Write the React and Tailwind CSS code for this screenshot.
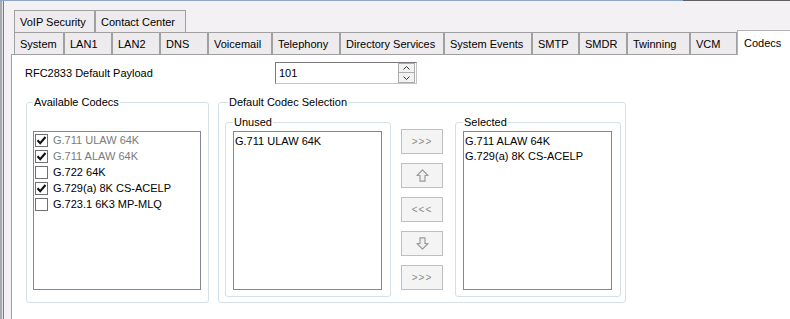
import React from "react";

function Tab({ className, children }) {
  return (
    <div
      className={
        "h-[22px] border border-b-0 border-[#a0a0a0] bg-[#eeebee] pl-[5px] pt-[1px] flex items-center whitespace-nowrap overflow-hidden " +
        className
      }
    >
      {children}
    </div>
  );
}

function Check({ checked }) {
  return (
    <div className="w-[13px] h-[13px] border border-[#707070] bg-white flex items-center justify-center shrink-0">
      {checked && (
        <svg width="11" height="11" viewBox="0 0 11 11">
          <path d="M1.5 5.2 L4.2 8.2 L9.5 2" fill="none" stroke="#111" strokeWidth="2.1" />
        </svg>
      )}
    </div>
  );
}

function CodecRow({ checked, disabled, label }) {
  return (
    <div className="h-[16px] flex items-center gap-[5px] pl-[1px]">
      <Check checked={checked} />
      <span className={disabled ? "text-[#7a7a7a]" : "text-black"}>{label}</span>
    </div>
  );
}

function Btn({ children }) {
  return (
    <div className="w-[42px] h-[25px] border border-[#bfbfbf] bg-[#f4f4f4] flex items-center justify-center text-[#8a8a8a] text-[10px] tracking-[1px]">
      {children}
    </div>
  );
}

function UpArrow() {
  return (
    <svg width="13" height="13" viewBox="0 0 13 13">
      <path d="M6.5 0.8 L12 6.5 L9 6.5 L9 12.2 L4 12.2 L4 6.5 L1 6.5 Z" fill="#f0f0f0" stroke="#9a9a9a" strokeWidth="1.2" strokeLinejoin="round" />
    </svg>
  );
}

function DownArrow() {
  return (
    <svg width="13" height="13" viewBox="0 0 13 13">
      <path d="M6.5 12.2 L12 6.5 L9 6.5 L9 0.8 L4 0.8 L4 6.5 L1 6.5 Z" fill="#f0f0f0" stroke="#9a9a9a" strokeWidth="1.2" strokeLinejoin="round" />
    </svg>
  );
}

function ListBox({ children }) {
  return (
    <div className="w-[149px] h-[159px] border border-[#828790] bg-white pl-[1px] pt-[1px]">
      {children}
    </div>
  );
}

export default function App() {
  return (
    <div className="w-[790px] h-[319px] overflow-hidden bg-[#f4f1f4] flex flex-col font-['Liberation_Sans',Arial,sans-serif] text-[11px] leading-[13px] text-black">
      {/* top line */}
      <div className="h-px flex shrink-0">
        <div className="w-[683px] bg-[#8ca6c8]" />
        <div className="flex-1 bg-[#606060]" />
      </div>
      <div className="flex-1 flex min-h-0">
        <div className="w-[2px] bg-[#a8aab2]" />
        <div className="w-px bg-[#e2e2e6]" />
        <div className="w-px bg-[#7d7d7d]" />
        <div className="w-[7px]" />
        <div className="flex-1 flex flex-col pt-[9px] min-w-0">
          {/* tab row 1 */}
          <div className="flex pl-[3px]">
            <Tab className="w-[81px]">VoIP Security</Tab>
            <Tab className="w-[91px]">Contact Center</Tab>
          </div>
          {/* tab row 2 */}
          <div className="flex pl-[3px] h-[22px] items-start">
            <Tab className="w-[50px]">System</Tab>
            <Tab className="w-[48px]">LAN1</Tab>
            <Tab className="w-[48px]">LAN2</Tab>
            <Tab className="w-[48px]">DNS</Tab>
            <Tab className="w-[64px]">Voicemail</Tab>
            <Tab className="w-[68px]">Telephony</Tab>
            <Tab className="w-[104px]">Directory Services</Tab>
            <Tab className="w-[88px]">System Events</Tab>
            <Tab className="w-[47px]">SMTP</Tab>
            <Tab className="w-[48px]">SMDR</Tab>
            <Tab className="w-[63px]">Twinning</Tab>
            <Tab className="w-[47px]">VCM</Tab>
            <div className="relative z-10 flex-1 h-[25px] -mt-[2px] border-l border-t border-[#b4b4b4] bg-white pl-[6px] flex items-center whitespace-nowrap">
              Codecs
            </div>
          </div>
          {/* panel */}
          <div className="flex-1 bg-white border-l border-t border-[#a0a0a0] pl-[13px] pt-[7px]">
            <div className="flex items-center h-[22px]">
              <div className="w-[250px]">RFC2833 Default Payload</div>
              <div className="w-[142px] h-[22px] border border-t-[#7a7a7a] border-l-[#7a7a7a] border-r-[#c4c4c4] border-b-[#c4c4c4] flex items-center">
                <span className="pl-[3px]">101</span>
                <div className="ml-auto mr-px flex flex-col">
                  <div className="w-[17px] h-[10px] border border-[#acacac] bg-[#f2f2f2] flex items-center justify-center">
                    <svg width="7" height="4" viewBox="0 0 7 4">
                      <path d="M0.5 3.5 L3.5 0.5 L6.5 3.5" fill="none" stroke="#333" strokeWidth="1" />
                    </svg>
                  </div>
                  <div className="w-[17px] h-[10px] border border-t-0 border-[#acacac] bg-[#f2f2f2] flex items-center justify-center">
                    <svg width="7" height="4" viewBox="0 0 7 4">
                      <path d="M0.5 0.5 L3.5 3.5 L6.5 0.5" fill="none" stroke="#333" strokeWidth="1" />
                    </svg>
                  </div>
                </div>
              </div>
            </div>

            <div className="flex mt-[12px] ml-px gap-[9px] items-start">
              {/* Available Codecs */}
              <fieldset className="w-[183px] border border-[#d5dfe5] rounded-[3px] pl-[6px] pt-[22px] pb-[12px]">
                <legend className="px-px leading-[13px]">Available Codecs</legend>
                <div className="w-[168px] h-[159px] border border-[#828790] bg-white">
                  <CodecRow checked disabled label="G.711 ULAW 64K" />
                  <CodecRow checked disabled label="G.711 ALAW 64K" />
                  <CodecRow label="G.722 64K" />
                  <CodecRow checked label="G.729(a) 8K CS-ACELP" />
                  <CodecRow label="G.723.1 6K3 MP-MLQ" />
                </div>
              </fieldset>

              {/* Default Codec Selection */}
              <fieldset className="w-[408px] border border-[#d5dfe5] rounded-[3px] pl-[6px] pt-[7px] pb-[5px]">
                <legend className="ml-[3px] px-px leading-[13px]">Default Codec Selection</legend>
                <div className="flex items-start">
                  <fieldset className="w-[166px] border border-[#d5dfe5] rounded-[3px] pl-[7px] pt-[2px] pb-[6px]">
                    <legend className="px-px leading-[13px]">Unused</legend>
                    <ListBox>
                      <div className="h-[15px] flex items-center pt-px">G.711 ULAW 64K</div>
                    </ListBox>
                  </fieldset>

                  <div className="ml-[10px] pt-[13px] flex flex-col gap-[9px]">
                    <Btn>&gt;&gt;&gt;</Btn>
                    <Btn>
                      <UpArrow />
                    </Btn>
                    <Btn>&lt;&lt;&lt;</Btn>
                    <Btn>
                      <DownArrow />
                    </Btn>
                    <Btn>&gt;&gt;&gt;</Btn>
                  </div>

                  <fieldset className="ml-[12px] w-[166px] border border-[#d5dfe5] rounded-[3px] pl-[7px] pt-[2px] pb-[6px]">
                    <legend className="px-px leading-[13px]">Selected</legend>
                    <ListBox>
                      <div className="h-[15px] flex items-center pt-px">G.711 ALAW 64K</div>
                      <div className="h-[15px] flex items-center pt-px">G.729(a) 8K CS-ACELP</div>
                    </ListBox>
                  </fieldset>
                </div>
              </fieldset>
            </div>
          </div>
        </div>
      </div>
    </div>
  );
}
